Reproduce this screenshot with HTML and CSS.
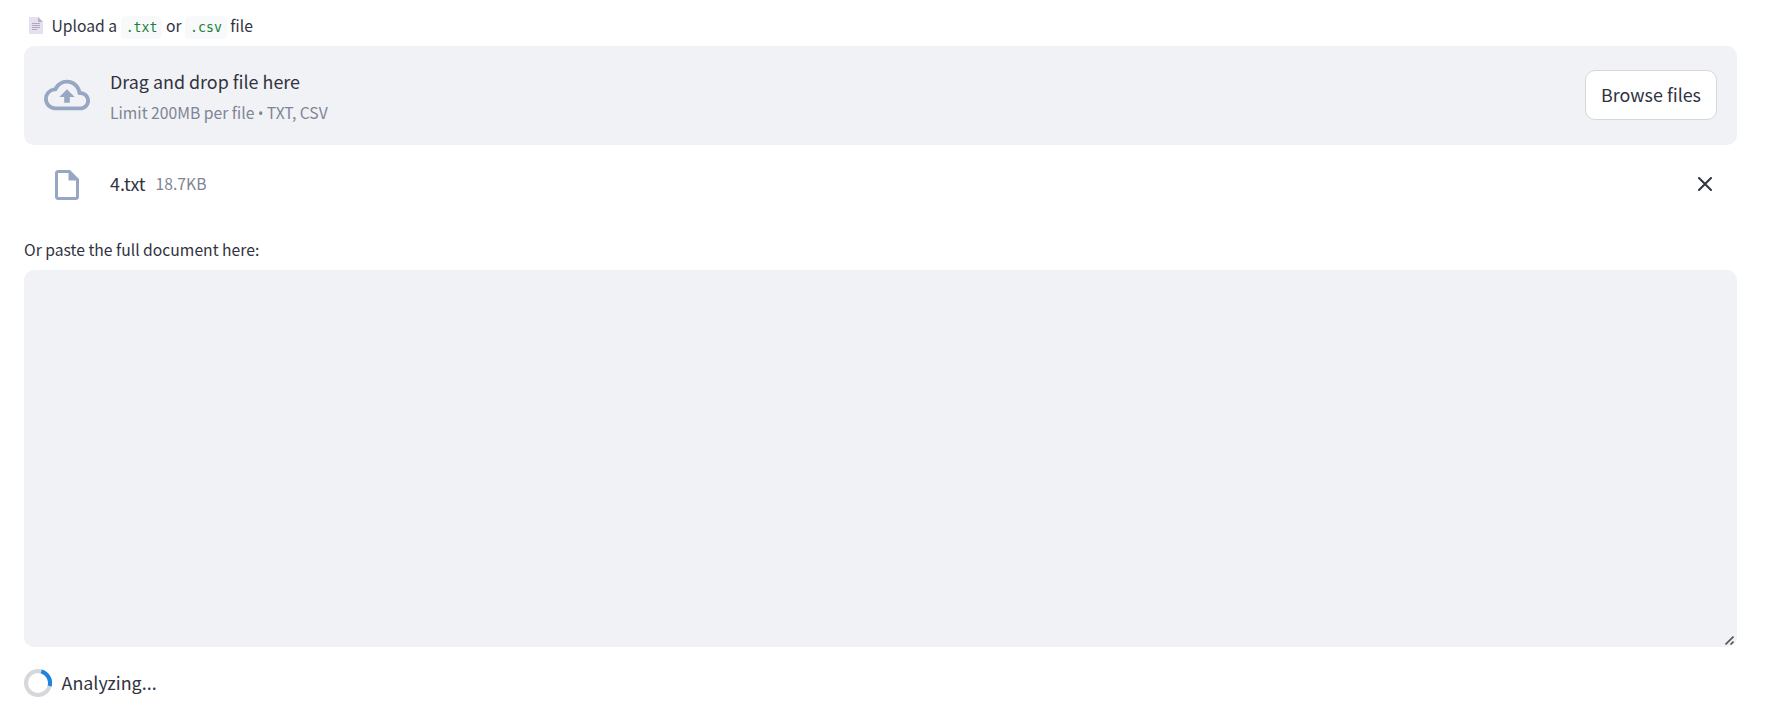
FILE: index.html
```html
<!DOCTYPE html>
<html lang="en">
<head>
    <meta charset="UTF-8">
    <meta name="viewport" content="width=device-width, initial-scale=1.0">
    <title>Document Analyzer</title>
    <link rel="stylesheet" href="styles.css">
</head>
<body>
    <main>
        <div class="label upload-label">
            <svg class="page-icon" viewBox="0 0 14 17">
                <path fill="#e6dff0" d="M0 0h9l5 5v12H0z"/>
                <path fill="#b9b1c4" d="M9 0v5h5z"/>
                <path fill="#b0a8bb" d="M3 6h8v1H3zM3 8h8v1H3zM3 10h8v1H3zM3 12h5v1H3z"/>
            </svg>
            <span class="upload-text">Upload a <code>.txt</code> or <code>.csv</code> file</span>
        </div>

        <section class="dropzone">
            <svg class="cloud-icon" viewBox="0 0 24 24">
                <path d="M19.35 10.04A7.49 7.49 0 0 0 12 4C9.11 4 6.6 5.64 5.35 8.04A5.994 5.994 0 0 0 0 14c0 3.31 2.69 6 6 6h13c2.76 0 5-2.24 5-5 0-2.64-2.05-4.78-4.65-4.96zM19 18H6c-2.21 0-4-1.79-4-4 0-2.05 1.53-3.76 3.56-3.97l1.07-.11.5-.95A5.469 5.469 0 0 1 12 6c2.62 0 4.88 1.86 5.39 4.43l.3 1.5 1.53.11A2.98 2.98 0 0 1 22 15c0 1.65-1.35 3-3 3zM8 13h2.55v3h2.9v-3H16l-4-4z"/>
            </svg>
            <div class="instructions">
                <span class="drop-title">Drag and drop file here</span>
                <span class="small">Limit 200MB per file <span class="bullet">•</span> TXT, CSV</span>
            </div>
            <button class="browse">Browse files</button>
        </section>

        <div class="file-row">
            <svg class="file-icon" viewBox="0 0 24 24">
                <path d="M6 2c-1.1 0-1.99.9-1.99 2L4 20c0 1.1.89 2 1.99 2H18c1.1 0 2-.9 2-2V8l-6-6H6zm0 18V4h7v5h5v11H6z"/>
            </svg>
            <span class="file-name">4.txt</span>
            <span class="small file-size">18.7KB</span>
            <svg class="close-icon" viewBox="0 0 14 14">
                <path d="M1 1l12 12M13 1L1 13"/>
            </svg>
        </div>

        <label class="label paste-label" for="document">Or paste the full document here:</label>
        <div class="textarea-wrap">
            <textarea id="document"></textarea>
            <svg class="grip" viewBox="0 0 9 9">
                <path d="M0.5 8.5l8-8M5.5 8.5l3-3"/>
            </svg>
        </div>

        <div class="spinner-row">
            <svg class="spinner" viewBox="0 0 28 28">
                <circle cx="14" cy="14" r="12"/>
                <path d="M17.3 2.4A12 12 0 0 1 25.7 16.9"/>
            </svg>
            <span class="spinner-text">Analyzing...</span>
        </div>
    </main>
</body>
</html>
```
FILE: styles.css
```css
* {
    margin: 0;
    padding: 0;
    box-sizing: border-box;
}

body {
    font-family: "Noto Sans CJK SC", sans-serif;
    font-size: 17.9px;
    line-height: 30px;
    background-color: #fff;
    color: #31333f;
    overflow: hidden;
}

main {
    padding: 11px 43px 0 24px;
}

.label {
    display: flex;
    align-items: center;
    font-size: 15.7px;
}

.upload-label {
    height: 35px;
    padding-bottom: 5px;
}

.upload-text {
    padding-top: 2px;
}

.page-icon {
    width: 14px;
    height: 17px;
    margin: 0 8.5px 1px 5px;
}

code {
    font-family: "DejaVu Sans Mono", monospace;
    font-size: 13.2px;
    padding: 4px 5px;
    border-radius: 5px;
    background-color: #f8f9fb;
    color: #158237;
}

.dropzone {
    display: flex;
    align-items: center;
    height: 99px;
    padding: 0 20px 1px;
    border-radius: 10px;
    background-color: #f0f2f6;
}

.cloud-icon {
    width: 46px;
    height: 46px;
    margin-right: 20px;
    fill: #97a6c3;
}

.instructions {
    display: flex;
    flex-direction: column;
    flex: 1;
    gap: 2px;
    padding-top: 5px;
}

.small {
    font-size: 15.7px;
    color: #808495;
}

.bullet {
    font-family: "Noto Sans", sans-serif;
    font-size: 14px;
}

.browse {
    width: 132px;
    height: 50px;
    border: 1px solid #d6d7dc;
    border-radius: 10px;
    background-color: #fff;
    color: #31333f;
    font: inherit;
    padding-bottom: 3px;
}

.file-row {
    display: flex;
    align-items: center;
    height: 79px;
    padding: 0 25px;
}

.file-icon {
    width: 36px;
    height: 36px;
    margin-right: 25px;
    fill: #97a6c3;
}

.file-name {
    padding-bottom: 4px;
}

.file-size {
    margin-left: 10px;
    padding-bottom: 2px;
}

.close-icon {
    width: 14px;
    height: 14px;
    margin: 0 0 1px auto;
    stroke: #31333f;
    stroke-width: 2;
    stroke-linecap: round;
}

.paste-label {
    margin-top: 10px;
    height: 36px;
    padding-bottom: 4px;
}

.textarea-wrap {
    position: relative;
    height: 377px;
}

textarea {
    display: block;
    width: 100%;
    height: 100%;
    border: none;
    border-radius: 10px;
    background-color: #f0f2f6;
    resize: none;
    outline: none;
}

/* resize handle in the corner */
.grip {
    position: absolute;
    right: 3px;
    bottom: 2px;
    width: 9px;
    height: 9px;
    stroke: #555;
    stroke-width: 1.6;
}

.spinner-row {
    display: flex;
    align-items: center;
    margin-top: 20px;
}

.spinner {
    width: 28px;
    height: 28px;
    margin-right: 9.5px;
    fill: none;
    stroke: #d6d7da;
    stroke-width: 4;
}

.spinner path {
    stroke: #1c83e1;
}

.spinner-text {
    padding-bottom: 2px;
}
```
